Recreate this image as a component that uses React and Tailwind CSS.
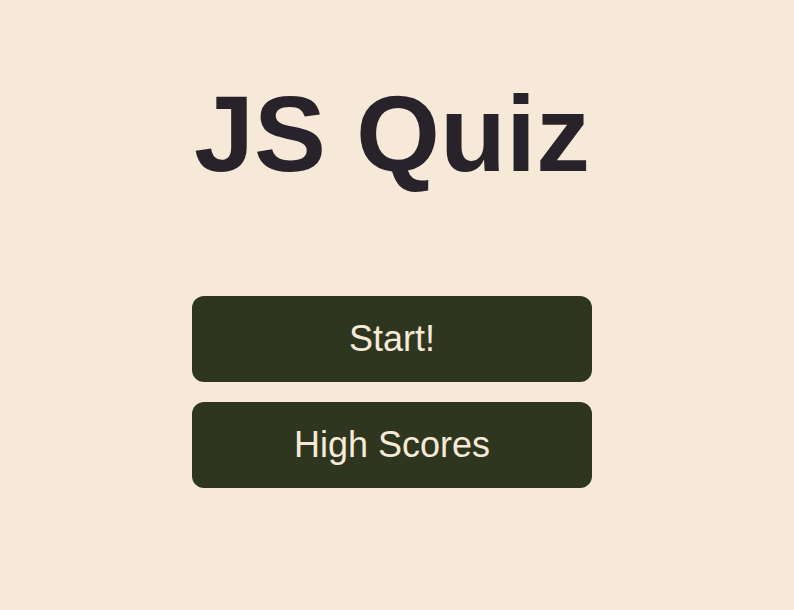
import React from 'react';

// Home screen of the quiz
const App = () => {
  return (
    <div className="min-h-screen bg-[#f7e9d8] pr-[10px] flex flex-col items-center font-['Liberation_Sans',Arial,sans-serif]">
      <h1 className="mt-[80px] text-[108px] leading-none font-bold text-[#28232a]">JS Quiz</h1>
      <div className="mt-[108px] flex flex-col gap-5 w-[400px]">
        <button className="h-[86px] rounded-xl bg-[#2e361f] text-[#f7e9d8] text-[36px]">Start!</button>
        <button className="h-[86px] rounded-xl bg-[#2e361f] text-[#f7e9d8] text-[36px]">High Scores</button>
      </div>
    </div>
  );
};

export default App;
